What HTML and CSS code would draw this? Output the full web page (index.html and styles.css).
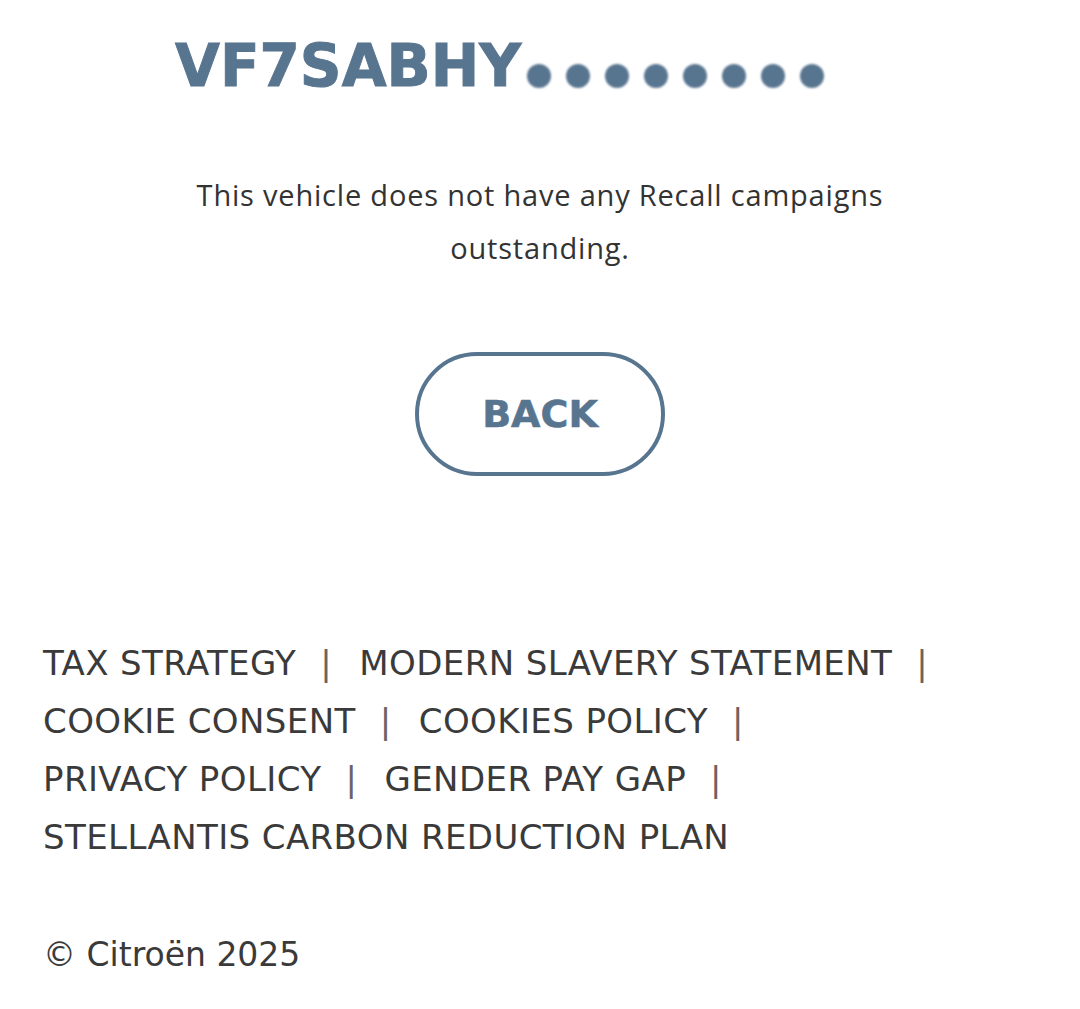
FILE: index.html
```html
<!DOCTYPE html>
<html lang="en">
<head>
<meta charset="utf-8">
<title>Recall check</title>
<link rel="stylesheet" href="styles.css">
</head>
<body>
<main class="result">
  <h1 class="vin"><span class="vin-text">VF7SABHY</span><span class="vin-mask"><i></i><i></i><i></i><i></i><i></i><i></i><i></i><i></i></span></h1>
  <p class="message">This vehicle does not have any Recall campaigns outstanding.</p>
  <a class="back-btn" href="#">BACK</a>
</main>
<footer class="footer">
  <nav class="links">
    <span class="item"><a href="#">TAX STRATEGY</a><span class="sep">|</span></span>
    <span class="item"><a href="#">MODERN SLAVERY STATEMENT</a><span class="sep">|</span></span>
    <span class="item"><a href="#">COOKIE CONSENT</a><span class="sep">|</span></span>
    <span class="item"><a href="#">COOKIES POLICY</a><span class="sep">|</span></span>
    <span class="item"><a href="#">PRIVACY POLICY</a><span class="sep">|</span></span>
    <span class="item"><a href="#">GENDER PAY GAP</a><span class="sep">|</span></span>
    <span class="item"><a href="#">STELLANTIS CARBON REDUCTION PLAN</a></span>
  </nav>
  <p class="copy">© Citroën 2025</p>
</footer>
</body>
</html>
```
FILE: styles.css
```css
html, body {
  margin: 0;
  padding: 0;
  background: #ffffff;
}
body {
  width: 1080px;
  font-family: "Open Sans", "Lato", sans-serif;
  color: #333333;
}
.result {
  display: flex;
  flex-direction: column;
  align-items: center;
  padding-top: 30px;
}
.vin {
  align-self: flex-start;
  margin: 0 0 0 175px;
  display: flex;
  align-items: baseline;
  font-family: "DejaVu Sans", sans-serif;
  font-weight: 700;
  font-size: 58px;
  line-height: 72px;
  color: #587590;
  -webkit-text-stroke: 1px #587590;
}
.vin-mask {
  display: flex;
  gap: 15px;
  margin-left: 6px;
}
.vin-mask i {
  display: block;
  width: 24px;
  height: 24px;
  border-radius: 50%;
  background: #587590;
  filter: blur(1.2px);
  transform: translateY(2px);
}
.message {
  width: 740px;
  margin: 66px 0 0;
  text-align: center;
  font-size: 29px;
  line-height: 53px;
  letter-spacing: 0.8px;
  color: #333333;
}
.back-btn {
  margin-top: 78px;
  box-sizing: border-box;
  width: 250px;
  height: 124px;
  border: 4px solid #587590;
  border-radius: 62px;
  display: flex;
  align-items: center;
  justify-content: center;
  font-family: "DejaVu Sans", sans-serif;
  font-weight: 700;
  font-size: 38px;
  color: #587590;
  -webkit-text-stroke: 0.6px #587590;
  text-decoration: none;
}
.footer {
  padding: 158px 43px 0;
  font-family: "DejaVu Sans", sans-serif;
}
.links {
  font-size: 34px;
  letter-spacing: 0.4px;
  line-height: 58px;
  color: #3a3a3a;
}
.item {
  white-space: nowrap;
}
.links a {
  color: #3a3a3a;
  text-decoration: none;
}
.sep {
  color: #6e6262;
  margin: 0 16px 0 24px;
}
.copy {
  margin: 64px 0 0;
  font-size: 33px;
  line-height: 50px;
  color: #3a3a3a;
}
```
